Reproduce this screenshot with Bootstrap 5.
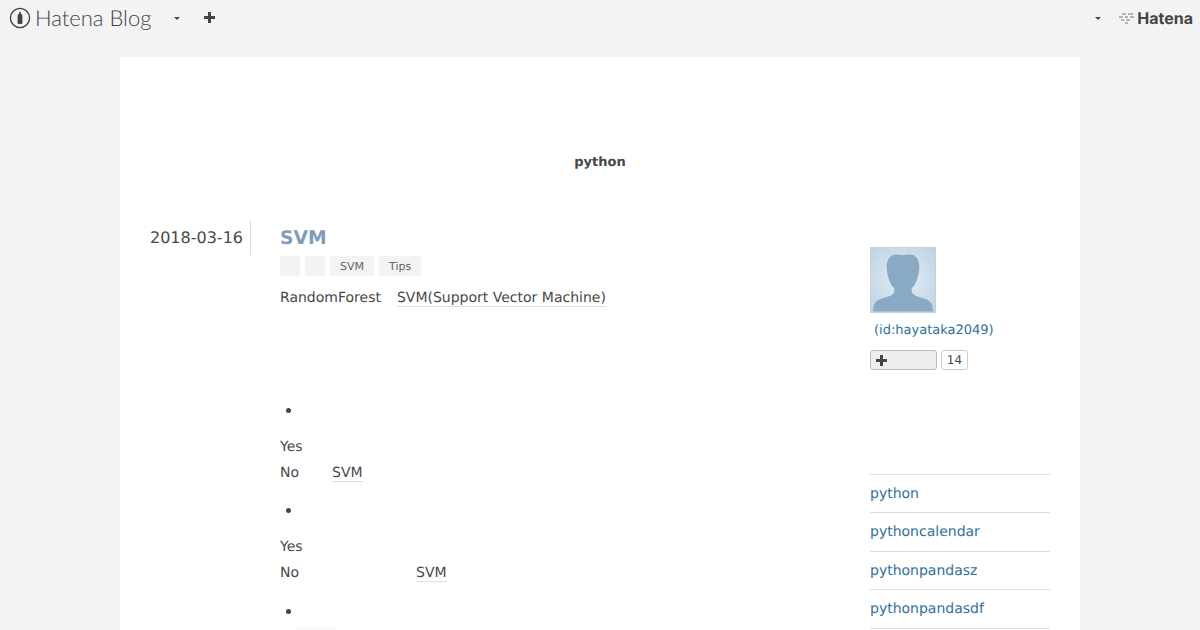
<!DOCTYPE html>
<html lang="en">
<head>
  <meta charset="UTF-8" />
  <title>python</title>
  <link href="https://cdn.jsdelivr.net/npm/bootstrap@5.3.3/dist/css/bootstrap.min.css" rel="stylesheet">
  <style>
    html, body { height: 630px; overflow: hidden; }
    body { background: #f3f3f3; color: #484848; font-family: "DejaVu Sans", sans-serif; font-size: 14px; line-height: 1.5; text-rendering: geometricPrecision; }
    a { color: #2f719f; text-decoration: none; }
    .topbar { height: 36px; padding: 0 7px 0 9px; }
    .brand-name { font-family: Lato, sans-serif; font-weight: 300; font-size: 22px; color: #444; line-height: 36px; margin-left: 4px; width: 118px; white-space: nowrap; }
    .caret-down { width: 0; height: 0; border-left: 3px solid transparent; border-right: 3px solid transparent; border-top: 3px solid #444; }
    .caret-blog { margin-left: 21px; }
    .plus-blog { margin-left: 24px; margin-top: -1px; }
    .hatena-glyph { margin-left: 17px; }
    .hatena-name { font-family: Inter, sans-serif; font-weight: 700; font-size: 16px; color: #444; line-height: 38px; margin-left: 2px; }
    .sheet { background: #fff; width: 960px; height: 573px; margin: 21px auto 0; overflow: hidden; padding: 0 30px; }
    .blog-title { font-size: 13px; font-weight: 700; text-align: center; padding-top: 96px; line-height: 20px; height: 163px; }
    .date-col { width: 101px; height: 35px; border-right: 1px solid #ddd; font-size: 16px; line-height: 35px; white-space: nowrap; }
    .entry-col { width: 560px; margin-left: 29px; }
    .entry-title { font-size: 18.72px; font-weight: 700; color: #7f9db9; height: 35px; line-height: 37px; }
    .cat-row { margin-top: 1px; gap: 5px; height: 20px; }
    .cat-chip { background: #f3f3f3; color: #666; font-size: 11px; height: 20px; min-width: 20px; padding: 0 10px; line-height: 21px; }
    .cat-chip.blank { padding: 0; }
    .entry-text { height: 26px; line-height: 26px; margin: 0; padding-top: 1px; box-sizing: border-box; }
    .keyword { border-bottom: 1px solid #ddd; }
    .entry-gap-a { margin-top: 8px; }
    .dot-row { height: 26px; padding-left: 6px; display: flex; align-items: center; }
    .dot-mark { width: 5px; height: 5px; border-radius: 50%; background: #444; }
    .gap-first { width: 16px; }
    .gap-second { width: 33px; }
    .gap-third { width: 117px; }
    .list-first { margin-top: 87px; }
    .after-dot { margin-top: 10px; }
    .list-second { margin-top: 12px; }
    .list-third { margin-top: 13px; }
    .faint-smear { width: 38px; height: 6px; margin: 2px 0 0 17px; background: #fafafa; }
    .side-col { width: 180px; margin-left: 30px; padding-top: 27px; }
    .avatar-box { width: 66px; height: 66px; display: block; }
    .user-id { font-size: 13px; margin: 8px 0 0 4px; line-height: 20px; }
    .sub-row { margin-top: 9px; height: 20px; }
    .sub-btn { width: 67px; height: 20px; border: 1px solid #bbb; border-radius: 3px; background: #eee; padding-left: 5px; display: flex; align-items: center; }
    .sub-count { margin-left: 4px; width: 27px; height: 20px; border: 1px solid #ccc; border-radius: 3px; font-size: 12px; line-height: 18px; text-align: center; }
    .tag-list { margin-top: 104px; border-top: 1px solid #ddd; }
    .tag-list a { display: block; height: 38.4px; line-height: 39px; border-bottom: 1px solid #ddd; }
  </style>
</head>
<body>

<div class="topbar d-flex align-items-center">
  <svg width="22" height="22" viewBox="0 0 22 22"><circle cx="11" cy="11" r="9.6" fill="none" stroke="#444" stroke-width="1.4"/><path d="M11 4.500c.7 0 .9 1 .9 2 1.200.8 1.500 1.800 1.500 3V16a1 1 0 0 1-1 1H9.600a1 1 0 0 1-1-1V9.500c0-1.200.3-2.200 1.500-3 0-1 .2-2 .9-2z" fill="#444"/></svg>
  <span class="brand-name">Hatena Blog</span>
  <span class="caret-down caret-blog"></span>
  <svg class="plus-blog" width="11" height="11" viewBox="0 0 11 11"><path d="M4 0h3v4h4v3H7v4H4V7H0V4h4z" fill="#444"/></svg>
  <span class="caret-down ms-auto"></span>
  <svg class="hatena-glyph" width="17" height="12" viewBox="0 0 17 12"><path d="M4 2h4M10 2h5M1 5h4M7 5h3M12 5h4M3 8h3M8 8h4M7 11h3" stroke="#777" stroke-width="1" fill="none"/></svg>
  <span class="hatena-name">Hatena</span>
</div>

<div class="sheet">
  <div class="blog-title">python</div>
  <div class="d-flex">
    <div class="date-col">2018-03-16</div>
    <div class="entry-col">
      <div class="entry-title">SVM</div>
      <div class="cat-row d-flex">
        <span class="cat-chip blank"></span>
        <span class="cat-chip blank"></span>
        <span class="cat-chip">SVM</span>
        <span class="cat-chip">Tips</span>
      </div>
      <p class="entry-text entry-gap-a">RandomForest<span class="d-inline-block gap-first"></span><span class="keyword">SVM(Support Vector Machine)</span></p>
      <div class="dot-row list-first"><span class="dot-mark"></span></div>
      <p class="entry-text after-dot">Yes</p>
      <p class="entry-text">No<span class="d-inline-block gap-second"></span><span class="keyword">SVM</span></p>
      <div class="dot-row list-second"><span class="dot-mark"></span></div>
      <p class="entry-text after-dot">Yes</p>
      <p class="entry-text">No<span class="d-inline-block gap-third"></span><span class="keyword">SVM</span></p>
      <div class="dot-row list-third"><span class="dot-mark"></span></div>
      <div class="faint-smear"></div>
    </div>
    <div class="side-col">
      <svg class="avatar-box" viewBox="0 0 66 66"><defs><radialGradient id="av" cx="50%" cy="50%" r="70%"><stop offset="0" stop-color="#e4edf4"/><stop offset="1" stop-color="#bdd3e3"/></radialGradient></defs><rect x=".5" y=".5" width="65" height="65" fill="url(#av)" stroke="#c5d0d8"/><path d="M33 8.300c3-1 8-1.500 11 .2 5 3 6 9 5 15.500-1 7-3 13-7 17-1 4 0 6 4 8 6 2 14 3 16 9l1 6.500H3l1-6.500c2-6 10-7 16-9 4-2 5-4 4-8-4-4-6-10-7-17-1-6.500 0-12.500 5-15.500 3-1.700 8-1.200 11-.2z" fill="#8aa9c3"/></svg>
      <p class="user-id mb-0"><a href="#">(id:hayataka2049)</a></p>
      <div class="sub-row d-flex">
        <div class="sub-btn"><svg width="11" height="11" viewBox="0 0 11 11"><path d="M4 0h3v4h4v3H7v4H4V7H0V4h4z" fill="#444"/></svg></div>
        <div class="sub-count">14</div>
      </div>
      <div class="tag-list">
        <a href="#">python</a>
        <a href="#">pythoncalendar</a>
        <a href="#">pythonpandasz</a>
        <a href="#">pythonpandasdf</a>
      </div>
    </div>
  </div>
</div>

<script src="https://cdn.jsdelivr.net/npm/bootstrap@5.3.3/dist/js/bootstrap.bundle.min.js"></script>
</body>
</html>
